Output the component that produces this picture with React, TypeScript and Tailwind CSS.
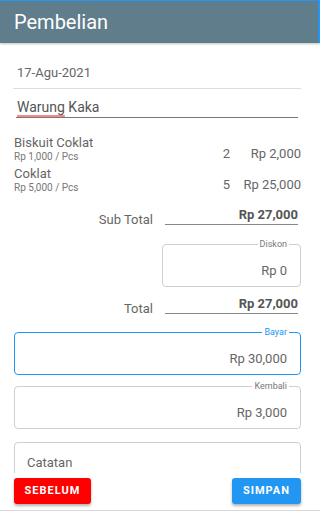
import React from "react";

const items = [
  { name: "Biskuit Coklat", unit: "Rp 1,000 / Pcs", qty: 2, total: "Rp 2,000" },
  { name: "Coklat", unit: "Rp 5,000 / Pcs", qty: 5, total: "Rp 25,000" },
];

function TotalRow({ label, value, className = "" }: { label: string; value: string; className?: string }) {
  return (
    <div className={`flex items-start justify-end pr-[3px] ${className}`}>
      <span className="pt-[5px] text-[13px] leading-4 text-[#666]">{label}</span>
      <div className="ml-[12px] w-[133px] border-b border-[#888] pb-px text-right text-[13px] font-bold leading-4 text-[#555]">
        {value}
      </div>
    </div>
  );
}

function Outlined({
  label,
  value,
  active = false,
  className = "",
}: {
  label: string;
  value: string;
  active?: boolean;
  className?: string;
}) {
  return (
    <div
      className={`relative h-[43px] rounded-[4px] pr-[13px] pt-[13px] text-right ${
        active ? "border-[1.5px] border-[#2196f3]" : "border border-[#cfcfcf]"
      } ${className}`}
    >
      <span
        className={`absolute -top-[6px] right-[11px] bg-white px-[2px] text-[9px] leading-[11px] ${
          active ? "text-[#2196f3]" : "text-[#777]"
        }`}
      >
        {label}
      </span>
      <span className="text-[13px] leading-[18px] text-[#666]">{value}</span>
    </div>
  );
}

export default function App() {
  return (
    <div
      className="flex h-[512px] w-[320px] flex-col overflow-hidden bg-white"
      style={{ fontFamily: "Roboto, 'Noto Sans', sans-serif" }}
    >
      <div className="relative z-10 flex h-[43px] shrink-0 items-center border-t border-r-2 border-[#2196f3] bg-[#607d8b] pl-[14px] shadow-[0_1px_2px_rgba(0,0,0,0.25)]">
        <h1 className="text-[20px] leading-6 text-white">Pembelian</h1>
      </div>

      <div className="flex-1 overflow-hidden pl-[13px] pr-[19px]">
        <div className="mt-[20px] border-b border-[#ddd] pb-[5px] pl-[4px] text-[13px] leading-5 text-[#666]">
          17-Agu-2021
        </div>

        <div className="mx-[3px] mt-[8px] border-b border-[#777] pl-px text-[14px] leading-5 text-[#555]">
          <span className="underline decoration-[#f28b8b] decoration-[1.5px] underline-offset-[3px]">Warung</span> Kaka
        </div>

        <div className="mt-[17px] flex flex-col gap-[4px] pl-px">
          {items.map((it) => (
            <div key={it.name} className="flex items-end">
              <div className="flex-1">
                <div className="text-[13px] leading-4 text-[#666]">{it.name}</div>
                <div className="text-[10px] leading-[11px] text-[#777]">{it.unit}</div>
              </div>
              <span className="text-[13px] leading-4 text-[#666]">{it.qty}</span>
              <span className="ml-[9px] w-[62px] text-right text-[13px] leading-4 text-[#666]">{it.total}</span>
            </div>
          ))}
        </div>

        <TotalRow label="Sub Total" value="Rp 27,000" className="mt-[14px]" />

        <div className="flex justify-end">
          <Outlined label="Diskon" value="Rp 0" className="mt-[16px] w-[139px]" />
        </div>

        <TotalRow label="Total" value="Rp 27,000" className="mt-[9px]" />

        <Outlined label="Bayar" value="Rp 30,000" active className="mt-[15px] ml-px" />
        <Outlined label="Kembali" value="Rp 3,000" className="mt-[11px] ml-px" />

        <div className="mt-[13px] ml-px h-[60px] rounded-[4px] border border-[#cfcfcf] pl-[12px] pt-[11px] text-[13px] leading-[18px] text-[#666]">
          Catatan
        </div>
      </div>

      <div className="shrink-0 bg-white">
        <div className="flex justify-between pl-[14px] pr-[19px] pt-[5px]">
          <button className="h-[26px] w-[77px] rounded-[3px] bg-[#ff0000] text-[11px] font-bold tracking-[1px] text-white shadow-[0_2px_3px_rgba(0,0,0,0.3)]">
            SEBELUM
          </button>
          <button className="h-[26px] w-[69px] rounded-[3px] bg-[#2196f3] text-[11px] font-bold tracking-[1px] text-white shadow-[0_2px_3px_rgba(0,0,0,0.3)]">
            SIMPAN
          </button>
        </div>
        <div className="mt-[6px] h-px bg-[#d8d8d8]" />
        <div className="h-px" />
      </div>
    </div>
  );
}
